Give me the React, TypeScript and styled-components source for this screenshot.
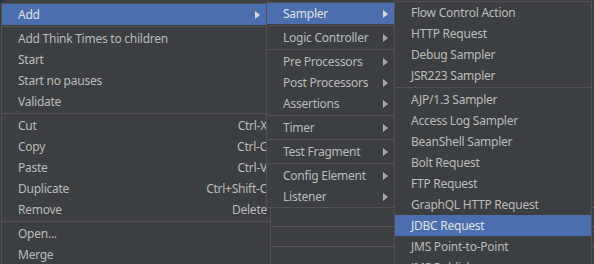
import styled, { createGlobalStyle } from 'styled-components';

type Entry =
  | { kind: 'item'; label: string; shortcut?: string; sub?: boolean; active?: boolean }
  | { kind: 'sep' };

const item = (label: string, extra: Partial<{ shortcut: string; sub: boolean; active: boolean }> = {}): Entry => ({
  kind: 'item',
  label,
  ...extra,
});
const sep: Entry = { kind: 'sep' };

const mainMenu: Entry[] = [
  item('Add', { sub: true, active: true }),
  sep,
  item('Add Think Times to children'),
  item('Start'),
  item('Start no pauses'),
  item('Validate'),
  sep,
  item('Cut', { shortcut: 'Ctrl-X' }),
  item('Copy', { shortcut: 'Ctrl-C' }),
  item('Paste', { shortcut: 'Ctrl-V' }),
  item('Duplicate', { shortcut: 'Ctrl+Shift-C' }),
  item('Remove', { shortcut: 'Delete' }),
  sep,
  item('Open...'),
  item('Merge'),
];

const addMenu: Entry[] = [
  item('Sampler', { sub: true, active: true }),
  sep,
  item('Logic Controller', { sub: true }),
  sep,
  item('Pre Processors', { sub: true }),
  item('Post Processors', { sub: true }),
  item('Assertions', { sub: true }),
  sep,
  item('Timer', { sub: true }),
  sep,
  item('Test Fragment', { sub: true }),
  sep,
  item('Config Element', { sub: true }),
  item('Listener', { sub: true }),
];

const samplerMenu: Entry[] = [
  item('Flow Control Action'),
  item('HTTP Request'),
  item('Debug Sampler'),
  item('JSR223 Sampler'),
  sep,
  item('AJP/1.3 Sampler'),
  item('Access Log Sampler'),
  item('BeanShell Sampler'),
  item('Bolt Request'),
  item('FTP Request'),
  item('GraphQL HTTP Request'),
  item('JDBC Request', { active: true }),
  item('JMS Point-to-Point'),
  item('JMS Publisher'),
];

const GlobalStyle = createGlobalStyle`
  html, body {
    margin: 0;
    padding: 0;
    background: #3c3f41;
  }
  body {
    font-family: "Noto Sans", "Liberation Sans", sans-serif;
    -webkit-font-smoothing: antialiased;
  }
`;

const Screen = styled.div`
  position: relative;
  width: 594px;
  height: 264px;
  overflow: hidden;
  background: #3c3f41;
`;

// panels of the window behind the popups
const Backdrop = styled.div`
  display: flex;
  flex-direction: column;
  padding-top: 207px;
  padding-left: 270px;
  height: 100%;
  box-sizing: border-box;
`;

const BackdropRow = styled.div<{ $h: number }>`
  height: ${(p) => p.$h}px;
  border-left: 1px solid #555555;
  border-top: 1px solid #555555;
  box-sizing: border-box;
`;

const TreeMark = styled.div`
  position: absolute;
  left: 0;
  top: 0;
  width: 2px;
  height: 3px;
  background: #1f3550;
`;

const Popup = styled.div<{ $left: number; $top: number; $width: number }>`
  position: absolute;
  left: ${(p) => p.$left}px;
  top: ${(p) => p.$top}px;
  width: ${(p) => p.$width}px;
  display: flex;
  flex-direction: column;
  background: #3c3f41;
  border: 1px solid #515151;
  box-sizing: border-box;
`;

const Row = styled.div<{ $active?: boolean; $pad: number }>`
  display: flex;
  align-items: center;
  height: 21px;
  flex-shrink: 0;
  padding: 0 ${(p) => p.$pad}px 0 16px;
  font-size: 12px;
  letter-spacing: -0.25px;
  color: ${(p) => (p.$active ? '#e2e2e2' : '#bbbbbb')};
  background: ${(p) => (p.$active ? '#4b6eaf' : 'transparent')};
  white-space: nowrap;
`;

const Label = styled.span`
  flex: 1;
`;

const Shortcut = styled.span`
  margin-left: 12px;
`;

const Arrow = styled.span<{ $active?: boolean; $gap: number }>`
  width: 0;
  height: 0;
  margin-right: ${(p) => p.$gap}px;
  border-top: 4px solid transparent;
  border-bottom: 4px solid transparent;
  border-left: 5px solid ${(p) => (p.$active ? '#d8d8d8' : '#a9a9a9')};
`;

const Separator = styled.div`
  height: 3px;
  flex-shrink: 0;
  display: flex;
  align-items: center;

  &::after {
    content: '';
    flex: 1;
    height: 1px;
    background: #515151;
  }
`;

const Menu = ({
  entries,
  left,
  top,
  width,
  pad,
  arrowGap = 0,
}: {
  entries: Entry[];
  left: number;
  top: number;
  width: number;
  pad: number;
  arrowGap?: number;
}) => (
  <Popup $left={left} $top={top} $width={width}>
    {entries.map((e, i) =>
      e.kind === 'sep' ? (
        <Separator key={i} />
      ) : (
        <Row key={i} $active={e.active} $pad={pad}>
          <Label>{e.label}</Label>
          {e.shortcut && <Shortcut>{e.shortcut}</Shortcut>}
          {e.sub && <Arrow $active={e.active} $gap={arrowGap} />}
        </Row>
      )
    )}
  </Popup>
);

export default function App() {
  return (
    <>
      <GlobalStyle />
      <Screen>
        <TreeMark />
        <Backdrop>
          <BackdropRow $h={22} />
          <BackdropRow $h={23} />
          <BackdropRow $h={20} />
        </Backdrop>
        <Menu entries={mainMenu} left={1} top={3} width={270} pad={3} arrowGap={7} />
        <Menu entries={addMenu} left={266} top={2} width={129} pad={6} />
        <Menu entries={samplerMenu} left={394} top={1} width={198} pad={6} />
      </Screen>
    </>
  );
}
